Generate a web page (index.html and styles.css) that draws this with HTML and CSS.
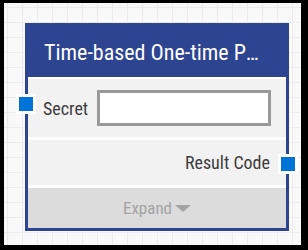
FILE: index.html
```html
<!DOCTYPE html>
<html>
<head>
<meta charset="utf-8">
<link rel="stylesheet" href="styles.css">
</head>
<body>
<div class="frame">
  <div class="canvas">
    <div class="node">
      <div class="node-header">
        <span class="title">Time-based One-time Password Generator</span>
      </div>
      <div class="node-body">
        <div class="row row-input">
          <span class="port port-in"></span>
          <span class="label">Secret</span>
          <div class="field"></div>
        </div>
        <div class="row row-output">
          <span class="label">Result Code</span>
          <span class="port port-out"></span>
        </div>
        <div class="row row-expand">
          <span class="expand-text">Expand</span>
          <span class="caret"></span>
        </div>
      </div>
    </div>
  </div>
</div>
</body>
</html>
```
FILE: styles.css
```css
* { box-sizing: border-box; }
html, body { margin: 0; padding: 0; background: #000; }
.frame {
  width: 308px;
  height: 250px;
  border-style: solid;
  border-color: #000;
  border-width: 3px 7px 5px 4px;
}
.canvas {
  width: 100%;
  height: 100%;
  background-color: #f9f9f9;
  background-image:
    linear-gradient(to right, #ececec 1px, transparent 1px),
    linear-gradient(to bottom, #ececec 1px, transparent 1px);
  background-size: 15px 15px;
  background-position: 3px 4px;
  padding: 20px 0 0 21px;
  font-family: "Roboto Condensed", Roboto, "Liberation Sans", sans-serif;
  font-stretch: 85%;
}
.node {
  width: 264px;
  height: 208px;
  border: 3px solid #2d4491;
  background: #fff;
  display: flex;
  flex-direction: column;
}
.node-header {
  height: 51px;
  background: #2d4491;
  display: flex;
  align-items: center;
  padding: 0 22px 0 16px;
  flex: none;
}
.title {
  color: #fff;
  font-size: 22px;
  white-space: nowrap;
  overflow: hidden;
  text-overflow: ellipsis;
  padding-top: 1px;
}
.node-body {
  flex: 1;
  display: flex;
  flex-direction: column;
  gap: 3px;
  padding-top: 2px;
}
.row {
  position: relative;
  display: flex;
  align-items: center;
  background: #f2f2f2;
}
.label {
  font-size: 18px;
  color: #3c3c3c;
}
.row-input {
  height: 58px;
  padding: 0 15px;
  gap: 9px;
}
.field {
  flex: 1;
  height: 36px;
  border: 3px solid #999;
  background: #fff;
}
.row-output {
  height: 45px;
  justify-content: flex-end;
  padding-right: 16px;
}
.row-expand {
  flex: 1;
  background: #dcdcdc;
  justify-content: center;
  gap: 3px;
}
.expand-text {
  font-size: 17px;
  color: #a3a3a3;
}
.caret {
  width: 0;
  height: 0;
  border-left: 8.5px solid transparent;
  border-right: 8.5px solid transparent;
  border-top: 7px solid #a3a3a3;
}
.port {
  position: absolute;
  width: 20px;
  height: 20px;
  border: 3px solid #fff;
  background: #0074d9;
}
.port-in { left: -12px; top: 15px; }
.port-out { right: -12px; top: 14px; }
```
